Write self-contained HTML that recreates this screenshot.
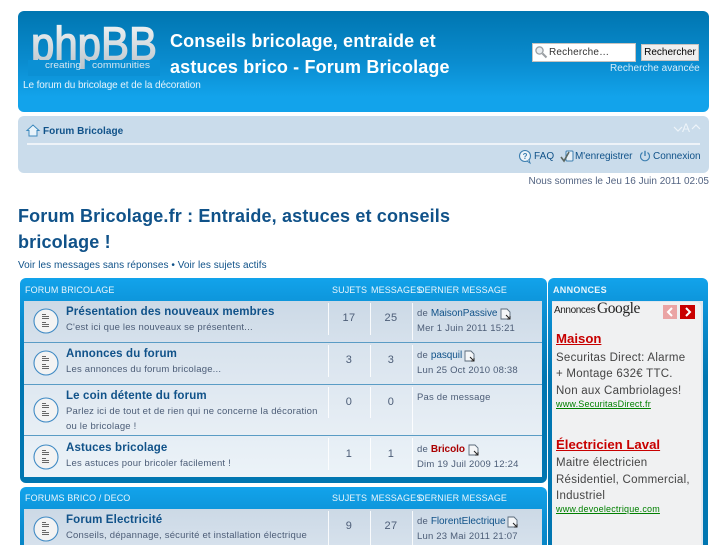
<!DOCTYPE html>
<html><head><meta charset="utf-8">
<style>
html,body{margin:0;padding:0;background:#fff;overflow:hidden;width:727px;height:545px}
body{position:relative;font-family:"Liberation Sans",sans-serif;font-size:10px;color:#536482;filter:blur(.3px)}
.a{position:absolute;white-space:nowrap}
.box{position:absolute;box-sizing:border-box}
.hd{color:#e8f5fc;font-size:9px;line-height:11px;letter-spacing:.1px}
.row{position:absolute;left:24px;width:518px}
.t{position:absolute;left:66px;font-weight:bold;font-size:11.5px;color:#105289;letter-spacing:.14px;white-space:nowrap;line-height:14px}
.d{position:absolute;left:66px;font-size:9.5px;color:#4c5d77;white-space:nowrap;line-height:15px;letter-spacing:.2px}
.v{position:absolute;width:1px;background:#fff;opacity:.85}
.n{position:absolute;font-size:11px;color:#4c5d77;width:40px;text-align:center;letter-spacing:.4px;line-height:12px}
.l{position:absolute;left:417px;font-size:9.5px;color:#4c5d77;white-space:nowrap;line-height:12px;letter-spacing:.2px}
.l b{font-weight:normal;color:#105289;font-size:10px;letter-spacing:-.05px}
.ad{position:absolute;left:556px;font-size:11.5px;color:#444;line-height:16.5px;letter-spacing:.25px;white-space:nowrap}
.adt{position:absolute;left:556px;font-size:13.2px;font-weight:bold;color:#c80000;text-decoration:underline;white-space:nowrap;line-height:16px}
.adu{position:absolute;left:556px;font-size:9px;color:#008000;text-decoration:underline;white-space:nowrap;line-height:11px;letter-spacing:.2px}
svg{position:absolute;overflow:visible}
</style></head><body>

<div class="box" style="left:18px;top:11px;width:691px;height:101px;border-radius:6px;background:linear-gradient(#0076b1 0,#0a8ccf 50%,#12a3eb 85%,#12a3eb 100%)"></div>

<svg style="left:0;top:0" width="170" height="80">
<defs><linearGradient id="g" x1="0" y1="0" x2="0" y2="1"><stop offset="0" stop-color="#f6f8f9"/><stop offset="1" stop-color="#b9c3ca"/></linearGradient></defs>
<text x="31" y="60" font-family="Liberation Sans" font-size="47" fill="url(#g)" stroke="url(#g)" stroke-width="1.3" textLength="126" lengthAdjust="spacingAndGlyphs">phpBB</text>
<rect x="28" y="60" width="52" height="16" fill="#0b90d4"/>
<rect x="90" y="60" width="70" height="16" fill="#0b90d4"/>
<rect x="78" y="69" width="14" height="7" fill="#0b90d4"/>
<text x="45" y="68" font-family="Liberation Sans" font-size="9.5" fill="#d6e6f0" textLength="36" lengthAdjust="spacingAndGlyphs">creating</text>
<text x="92" y="68" font-family="Liberation Sans" font-size="9.5" fill="#d6e6f0" textLength="58" lengthAdjust="spacingAndGlyphs">communities</text>
</svg>

<div class="a" style="left:170px;top:28px;color:#fff;font-weight:bold;font-size:18px;line-height:26px;letter-spacing:.15px">Conseils bricolage, entraide et<br>astuces brico - Forum Bricolage</div>
<div class="a" style="left:23px;top:79px;color:#e6f3fb;font-size:10px;line-height:13px;letter-spacing:-.1px">Le forum du bricolage et de la décoration</div>

<div class="box" style="left:532px;top:43px;width:104px;height:19px;background:#fff;border:1px solid #c7c3bf"></div>
<svg style="left:534px;top:45px" width="14" height="14" viewBox="0 0 14 14"><circle cx="5.5" cy="5.5" r="3.6" fill="#e8ecef" stroke="#9a9fa3" stroke-width="1.3"/><path d="M8.5 8.5L12.5 12.5" stroke="#9a9fa3" stroke-width="2"/></svg>
<div class="a" style="left:549px;top:47px;font-size:10px;color:#333;line-height:12px;letter-spacing:.2px">Recherche…</div>
<div class="box" style="left:641px;top:44px;width:58px;height:17px;background:#efefef;border:1px solid #c7c3bf;color:#000;font-size:10px;line-height:15px;text-align:center">Rechercher</div>
<div class="a" style="left:610px;top:63px;color:#d4ecf9;font-size:10px;line-height:12px;letter-spacing:.05px">Recherche avancée</div>

<div class="box" style="left:18px;top:116px;width:691px;height:57px;border-radius:6px;background:#cadceb"></div>
<div class="box" style="left:27px;top:143px;width:673px;height:2px;background:#eef3f8"></div>
<svg style="left:26px;top:124px" width="14" height="13" viewBox="0 0 14 13"><path d="M1 6.5L7 1l6 5.5h-2V12H3V6.5z" fill="#e8f3fa" stroke="#3d89bd" stroke-width="1"/></svg>
<div class="a" style="left:43px;top:125.5px;color:#105289;font-weight:bold;font-size:10px;line-height:12px;letter-spacing:.05px">Forum Bricolage</div>
<svg style="left:673px;top:123px" width="28" height="12" viewBox="0 0 28 12"><path d="M1 4l4 4 4-4M19 6l4-4 4 4" fill="none" stroke="#eef4f9" stroke-width="1.2"/></svg>
<div class="a" style="left:682px;top:122px;color:#eef4f9;font-size:12px;line-height:13px">A</div>

<svg style="left:518px;top:149px" width="15" height="15" viewBox="0 0 15 15"><circle cx="7" cy="7" r="5.5" fill="#eef4f9" stroke="#3d7fb0" stroke-width="1.1"/><path d="M9 12l3 2-1-3" fill="#eef4f9" stroke="#3d7fb0"/><text x="4.6" y="10" font-size="8" font-weight="bold" font-family="Liberation Sans" fill="#3d7fb0">?</text></svg>
<div class="a" style="left:534px;top:151px;color:#105289;font-size:10px;line-height:12px;letter-spacing:.1px">FAQ</div>
<svg style="left:559px;top:149px" width="15" height="15" viewBox="0 0 15 15"><rect x="7" y="2" width="7" height="10" rx="1" fill="#e6eff6" stroke="#3d7fb0"/><path d="M2 8l3 4 5-9" fill="none" stroke="#5a6660" stroke-width="1.6"/></svg>
<div class="a" style="left:575px;top:151px;color:#105289;font-size:10px;line-height:12px;letter-spacing:-.05px">M'enregistrer</div>
<svg style="left:639px;top:150px" width="12" height="12" viewBox="0 0 12 12"><path d="M3.5 2.5a4.5 4.5 0 1 0 5 0" fill="none" stroke="#3d7fb0" stroke-width="1.1"/><path d="M6 .8V6" stroke="#3d7fb0" stroke-width="1.4"/></svg>
<div class="a" style="left:653px;top:151px;color:#105289;font-size:10px;line-height:12px;letter-spacing:-.03px">Connexion</div>

<div class="a" style="right:18px;top:176px;color:#536482;font-size:10px;line-height:12px;letter-spacing:0">Nous sommes le Jeu 16 Juin 2011 02:05</div>

<div class="a" style="left:18px;top:203px;color:#105289;font-weight:bold;font-size:18px;line-height:26px;letter-spacing:.16px">Forum Bricolage.fr : Entraide, astuces et conseils<br>bricolage !</div>
<div class="a" style="left:18px;top:259px;color:#105289;font-size:10px;line-height:13px;letter-spacing:.05px">Voir les messages sans réponses • Voir les sujets actifs</div>

<!-- block 1 -->
<div class="box" style="left:20px;top:278px;width:527px;height:205px;border-radius:6px;background:linear-gradient(#12a3eb 0,#0a8ccf 40px,#0076b1 100px,#0076b1 100%)"></div>
<div class="a hd" style="left:25px;top:285px">FORUM BRICOLAGE</div>
<div class="a hd" style="left:332px;top:285px">SUJETS</div>
<div class="a hd" style="left:371px;top:285px">MESSAGES</div>
<div class="a hd" style="left:418px;top:285px">DERNIER MESSAGE</div>

<div class="row" style="top:301px;height:41px;background:linear-gradient(#ccd9e6,#d6e1ec)"></div>
<div class="row" style="top:342px;height:1px;background:#5a9cc5"></div>
<div class="row" style="top:343px;height:41px;background:linear-gradient(#d8e3ed,#dfe8f1)"></div>
<div class="row" style="top:384px;height:1px;background:#5a9cc5"></div>
<div class="row" style="top:385px;height:50px;background:linear-gradient(#dfe8f1,#e8eff5)"></div>
<div class="row" style="top:435px;height:1px;background:#5a9cc5"></div>
<div class="row" style="top:436px;height:41px;background:linear-gradient(#e6eef5,#ecf3f8)"></div>

<div class="v" style="left:328px;top:303px;height:32px"></div><div class="v" style="left:370px;top:303px;height:32px"></div><div class="v" style="left:412px;top:303px;height:37px"></div>
<div class="v" style="left:328px;top:345px;height:32px"></div><div class="v" style="left:370px;top:345px;height:32px"></div><div class="v" style="left:412px;top:345px;height:37px"></div>
<div class="v" style="left:328px;top:387px;height:31px"></div><div class="v" style="left:370px;top:387px;height:31px"></div><div class="v" style="left:412px;top:387px;height:46px"></div>
<div class="v" style="left:328px;top:438px;height:32px"></div><div class="v" style="left:370px;top:438px;height:32px"></div><div class="v" style="left:412px;top:438px;height:32px"></div>

<svg style="left:0;top:0" width="80" height="545">
<defs><g id="ic"><circle r="12" fill="#f3f3f3" stroke="#3f8ac4" stroke-width="1.1"/><path d="M-4-6.5h4M-4-4.5h7M-4-2.5h7M-4 1.5h4M-4 3.5h7M-4 5.5h7" stroke="#666" stroke-width="1"/></g></defs>
<use href="#ic" x="46" y="321"/>
<use href="#ic" x="46" y="363"/>
<use href="#ic" x="46" y="410"/>
<use href="#ic" x="46" y="457"/>
</svg>

<div class="t" style="top:305px">Présentation des nouveaux membres</div>
<div class="d" style="top:320px">C'est ici que les nouveaux se présentent...</div>
<div class="n" style="left:329px;top:312px">17</div>
<div class="n" style="left:371px;top:312px">25</div>
<div class="l" style="top:308px">de <b>MaisonPassive</b></div>
<div class="l" style="top:323px">Mer 1 Juin 2011 15:21</div>

<div class="t" style="top:347px">Annonces du forum</div>
<div class="d" style="top:362px">Les annonces du forum bricolage...</div>
<div class="n" style="left:329px;top:354px">3</div>
<div class="n" style="left:371px;top:354px">3</div>
<div class="l" style="top:350px">de <b>pasquil</b></div>
<div class="l" style="top:365px">Lun 25 Oct 2010 08:38</div>

<div class="t" style="top:389px">Le coin détente du forum</div>
<div class="d" style="top:404px">Parlez ici de tout et de rien qui ne concerne la décoration</div>
<div class="d" style="top:419px">ou le bricolage !</div>
<div class="n" style="left:329px;top:396px">0</div>
<div class="n" style="left:371px;top:396px">0</div>
<div class="l" style="top:392px">Pas de message</div>

<div class="t" style="top:441px">Astuces bricolage</div>
<div class="d" style="top:456px">Les astuces pour bricoler facilement !</div>
<div class="n" style="left:329px;top:448px">1</div>
<div class="n" style="left:371px;top:448px">1</div>
<div class="l" style="top:444px">de <b style="color:#aa0000;font-weight:bold">Bricolo</b></div>
<div class="l" style="top:459px">Dim 19 Juil 2009 12:24</div>

<!-- block 2 -->
<div class="box" style="left:20px;top:487px;width:527px;height:58px;border-radius:6px 6px 0 0;background:linear-gradient(#12a3eb 0,#0a8ccf 40px,#0076b1 100px)"></div>
<div class="a hd" style="left:25px;top:493px">FORUMS BRICO / DECO</div>
<div class="a hd" style="left:332px;top:493px">SUJETS</div>
<div class="a hd" style="left:371px;top:493px">MESSAGES</div>
<div class="a hd" style="left:418px;top:493px">DERNIER MESSAGE</div>
<div class="row" style="top:509px;height:36px;background:linear-gradient(#ccd9e6,#d6e1ec)"></div>
<div class="v" style="left:328px;top:511px;height:34px"></div><div class="v" style="left:370px;top:511px;height:34px"></div><div class="v" style="left:412px;top:511px;height:34px"></div>
<svg style="left:0;top:0" width="80" height="545"><use href="#ic" x="46" y="529"/></svg>
<div class="t" style="top:513px">Forum Electricité</div>
<div class="d" style="top:528px">Conseils, dépannage, sécurité et installation électrique</div>
<div class="n" style="left:329px;top:520px">9</div>
<div class="n" style="left:371px;top:520px">27</div>
<div class="l" style="top:516px">de <b>FlorentElectrique</b></div>
<div class="l" style="top:531px">Lun 23 Mai 2011 21:07</div>

<svg style="left:0;top:0" width="727" height="545">
<defs><g id="p"><path d="M0 0h6l3 3v7H0z" fill="#f4f6f8" stroke="#5a6a7a" stroke-width=".9"/><path d="M5 6l4 4M9 7v3H6" stroke="#222" stroke-width="1" fill="none"/></g></defs>
<use href="#p" x="501" y="309"/>
<use href="#p" x="465" y="351"/>
<use href="#p" x="469" y="445"/>
<use href="#p" x="508" y="517"/>
</svg>

<!-- ads -->
<div class="box" style="left:548px;top:278px;width:160px;height:267px;border-radius:6px 6px 0 0;background:linear-gradient(#12a3eb 0,#0a8ccf 40px,#0076b1 100px)"></div>
<div class="a hd" style="left:553px;top:285px;font-weight:bold;letter-spacing:.3px">ANNONCES</div>
<div class="box" style="left:552px;top:301px;width:151px;height:244px;background:#dfe7ef"></div>
<div class="box" style="left:552px;top:302px;width:149px;height:243px;background:#f0f1f2;border-radius:0 5px 0 0"></div>
<div class="a" style="left:554px;top:304px;font-size:10px;color:#222;line-height:13px;letter-spacing:-.4px">Annonces</div>
<div class="a" style="left:597px;top:300px;font-family:'Liberation Serif',serif;font-size:15.5px;color:#222;line-height:17px;letter-spacing:-.45px">Google</div>
<div class="box" style="left:663px;top:305px;width:14px;height:14px;background:#eaa4a4"></div>
<div class="box" style="left:680px;top:305px;width:15px;height:14px;background:#c90000"></div>
<svg style="left:663px;top:305px" width="32" height="14"><path d="M9 3L5 7l4 4" fill="none" stroke="#fff" stroke-width="2"/><path d="M23 3l4 4-4 4" fill="none" stroke="#fff" stroke-width="2"/></svg>

<div class="adt" style="top:331px">Maison</div>
<div class="ad" style="top:350px">Securitas Direct: Alarme</div>
<div class="ad" style="top:366px">+ Montage 632€ TTC.</div>
<div class="ad" style="top:383px">Non aux Cambriolages!</div>
<div class="adu" style="top:399px">www.SecuritasDirect.fr</div>

<div class="adt" style="top:436.5px">Électricien Laval</div>
<div class="ad" style="top:455px">Maitre électricien</div>
<div class="ad" style="top:472px">Résidentiel, Commercial,</div>
<div class="ad" style="top:488px">Industriel</div>
<div class="adu" style="top:504px">www.devoelectrique.com</div>

</body></html>
